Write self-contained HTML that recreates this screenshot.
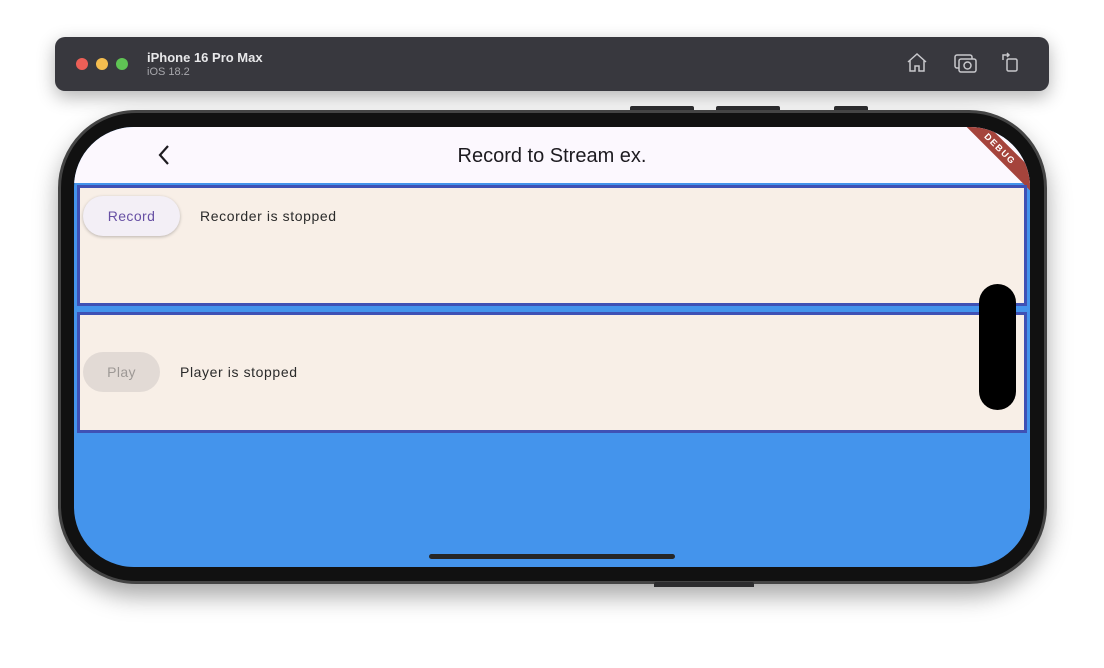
<!DOCTYPE html>
<html><head><meta charset="utf-8"><style>
*{margin:0;padding:0;box-sizing:border-box}
body{width:1104px;height:668px;background:#fff;position:relative;overflow:hidden;font-family:"Liberation Sans",sans-serif}
.bar{position:absolute;left:55px;top:37px;width:994px;height:54px;background:#38383e;border-radius:10px;box-shadow:0 6px 18px rgba(0,0,0,.3)}
.dot{position:absolute;top:21px;width:12px;height:12px;border-radius:50%}
.t1{position:absolute;left:92px;top:13px;color:#e8e8ea;font-weight:bold;font-size:13px}
.t2{position:absolute;left:92px;top:29px;color:#a8a8ad;font-size:11px}
.btn{position:absolute;background:#2c2c2e;height:4px;border-radius:2px 2px 0 0}
.phone{position:absolute;left:58px;top:110px;width:989px;height:474px;border-radius:78px;background:#111;border:3px solid #444;box-shadow:0 12px 24px rgba(0,0,0,.35)}
.screen{position:absolute;left:74px;top:127px;width:956px;height:440px;border-radius:60px;background:#4494ec;overflow:hidden}
.app{position:absolute;left:0;top:0;width:956px;height:56px;background:#fcf8fe}
.title{position:absolute;left:0;width:956px;top:18px;text-align:center;font-size:20px;color:#1d1b20}
.panel{position:absolute;left:3px;width:950px;background:#f8efe7;border:3px solid #3f51b5}
.pill{position:absolute;border-radius:20px;font-size:14px;text-align:center;line-height:40px;letter-spacing:.4px}
.lbl{position:absolute;font-size:14px;color:#2a2a2a;letter-spacing:.6px}
</style></head><body>
<div class="bar">
<div class="dot" style="left:21px;background:#ec5f57"></div>
<div class="dot" style="left:41px;background:#f4bd4f"></div>
<div class="dot" style="left:61px;background:#5fc454"></div>
<div class="t1">iPhone 16 Pro Max</div><div class="t2">iOS 18.2</div>
<svg style="position:absolute;left:850px;top:14px" width="24" height="24" viewBox="0 0 24 24" fill="none" stroke="#c8c8cc" stroke-width="1.5"><path d="M3 11L12 3l9 8M5 9.5V20h5v-5h4v5h5V9.5"/></svg>
<svg style="position:absolute;left:898px;top:14px" width="26" height="24" viewBox="0 0 26 24" fill="none" stroke="#c8c8cc" stroke-width="1.5"><rect x="2" y="4" width="17" height="13" rx="2"/><rect x="6" y="8" width="17" height="13" rx="2" fill="#38383e"/><circle cx="14.5" cy="14.5" r="3.5"/></svg>
<svg style="position:absolute;left:945px;top:13px" width="22" height="24" viewBox="0 0 22 24" fill="none" stroke="#c8c8cc" stroke-width="1.5"><rect x="7" y="9" width="10" height="12" rx="1.5"/><path d="M3 10V5h6M7 3l2 2-2 2"/></svg>
</div>
<div class="btn" style="left:630px;top:106px;width:64px"></div>
<div class="btn" style="left:716px;top:106px;width:64px"></div>
<div class="btn" style="left:834px;top:106px;width:34px"></div>
<div class="phone"></div>
<div class="btn" style="left:654px;top:582px;width:100px;height:5px"></div>
<div class="screen">
<div class="app">
<svg style="position:absolute;left:80px;top:16px" width="20" height="24" viewBox="0 0 20 24" fill="none" stroke="#1d1b20" stroke-width="2.2"><path d="M14 3L6 12l8 9"/></svg>
<div class="title">Record to Stream ex.</div>
<div style="position:absolute;right:-30px;top:14px;width:120px;height:16px;background:#a5443c;transform:rotate(45deg);transform-origin:center;color:#fff;font-size:9px;font-weight:bold;text-align:center;line-height:16px;letter-spacing:1.5px">DEBUG</div>
</div>
<div class="panel" style="top:58px;height:121px">
<div class="pill" style="left:3px;top:8px;width:97px;background:#f3eff6;color:#6750a4;box-shadow:0 1px 3px rgba(0,0,0,.25)">Record</div>
<div class="lbl" style="left:120px;top:20px">Recorder is stopped</div>
</div>
<div class="panel" style="top:185px;height:121px">
<div class="pill" style="left:3px;top:37px;width:77px;background:#e2dad5;color:#9d9895">Play</div>
<div class="lbl" style="left:100px;top:49px">Player is stopped</div>
</div>
<div style="position:absolute;left:905px;top:157px;width:37px;height:126px;border-radius:19px;background:#000"></div>
<div style="position:absolute;left:355px;top:427px;width:246px;height:5px;border-radius:3px;background:#262626"></div>
</div>
</body></html>
